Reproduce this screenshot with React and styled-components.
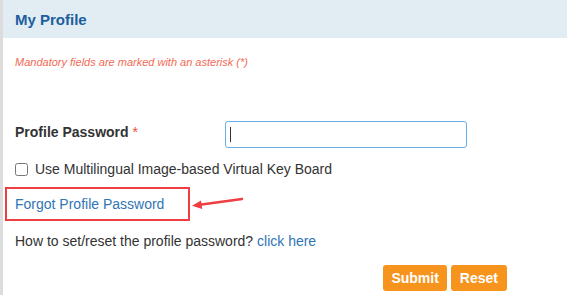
import React from 'react';
import styled, { createGlobalStyle } from 'styled-components';

const GlobalStyle = createGlobalStyle`
  html, body {
    margin: 0;
    padding: 0;
    background: #ffffff;
  }
  body {
    font-family: "Liberation Sans", Arial, sans-serif;
    color: #333333;
  }
`;

const Panel = styled.div`
  width: 567px;
  height: 295px;
  box-sizing: border-box;
  border-left: 3px solid #dcdcdc;
  overflow: hidden;
`;

const PanelHeader = styled.div`
  height: 38px;
  display: flex;
  align-items: center;
  padding-left: 12px;
  background: #e1edf3;
`;

const PanelTitle = styled.h3`
  margin: 0;
  font-size: 15px;
  font-weight: 700;
  color: #1d5e9e;
`;

const PanelBody = styled.div`
  padding: 17px 12px 0;
  display: flex;
  flex-direction: column;
`;

const Note = styled.p`
  margin: 0;
  font-size: 11px;
  line-height: 14px;
  font-style: italic;
  color: #f26a55;
`;

const FieldRow = styled.div`
  display: flex;
  align-items: flex-start;
  margin-top: 52px;
`;

const FieldLabel = styled.label`
  width: 210px;
  padding-top: 2px;
  font-size: 14px;
  line-height: 18px;
  font-weight: 700;
  color: #333333;
`;

const Required = styled.span`
  color: #f0503c;
  margin-left: 4px;
  font-weight: 400;
`;

const TextInput = styled.input`
  width: 242px;
  height: 27px;
  box-sizing: border-box;
  border: 1px solid #66afe9;
  border-radius: 3px;
  padding: 0 4px;
  font-size: 14px;
  outline: none;
  caret-color: #333333;
`;

const CheckRow = styled.label`
  display: flex;
  align-items: center;
  gap: 7px;
  height: 20px;
  margin-top: 11px;
  font-size: 14px;
  color: #333333;
`;

const Checkbox = styled.input`
  width: 13px;
  height: 13px;
  margin: 0;
`;

const AnnotRow = styled.div`
  display: flex;
  align-items: center;
  margin: 8px 0 0 -10px;
`;

const Highlight = styled.div`
  height: 34px;
  box-sizing: border-box;
  border: 2px solid #ef3e42;
  display: flex;
  align-items: center;
  padding: 0 0 0 8px;
  width: 185px;
`;

const Link = styled.a`
  color: #2f75b5;
  font-size: 14px;
  text-decoration: none;
  cursor: pointer;
`;

const HelpText = styled.p`
  margin: 10px 0 0;
  font-size: 14px;
  line-height: 20px;
  color: #333333;
`;

const Actions = styled.div`
  display: flex;
  justify-content: flex-end;
  gap: 4px;
  margin: 14px 48px 0 0;
`;

const Button = styled.button`
  height: 26px;
  padding: 0 ${(p) => p.$pad}px;
  border: none;
  border-radius: 3px;
  background: #f7941d;
  color: #ffffff;
  font-family: "Liberation Sans", Arial, sans-serif;
  font-size: 14px;
  font-weight: 700;
  cursor: pointer;
`;

const Caret = styled.span`
  position: absolute;
  left: 5px;
  top: 6px;
  width: 1px;
  height: 15px;
  background: #333333;
`;

const InputWrap = styled.div`
  position: relative;
`;

const Arrow = () => (
  <svg width="56" height="16" viewBox="0 0 56 16">
    <line x1="52" y1="3" x2="8" y2="9" stroke="#ef3e42" strokeWidth="2.4" strokeLinecap="round" />
    <polygon points="2,9.8 11,4.5 12.2,13" fill="#ef3e42" />
  </svg>
);

export default function App() {
  return (
    <>
      <GlobalStyle />
      <Panel>
        <PanelHeader>
          <PanelTitle>My Profile</PanelTitle>
        </PanelHeader>
        <PanelBody>
          <Note>Mandatory fields are marked with an asterisk (*)</Note>
          <FieldRow>
            <FieldLabel>
              Profile Password<Required>*</Required>
            </FieldLabel>
            <InputWrap>
              <TextInput type="password" />
              <Caret />
            </InputWrap>
          </FieldRow>
          <CheckRow>
            <Checkbox type="checkbox" />
            Use Multilingual Image-based Virtual Key Board
          </CheckRow>
          <AnnotRow>
            <Highlight>
              <Link>Forgot Profile Password</Link>
            </Highlight>
            <Arrow />
          </AnnotRow>
          <HelpText>
            How to set/reset the profile password? <Link>click here</Link>
          </HelpText>
          <Actions>
            <Button $pad={8}>Submit</Button>
            <Button $pad={9}>Reset</Button>
          </Actions>
        </PanelBody>
      </Panel>
    </>
  );
}
